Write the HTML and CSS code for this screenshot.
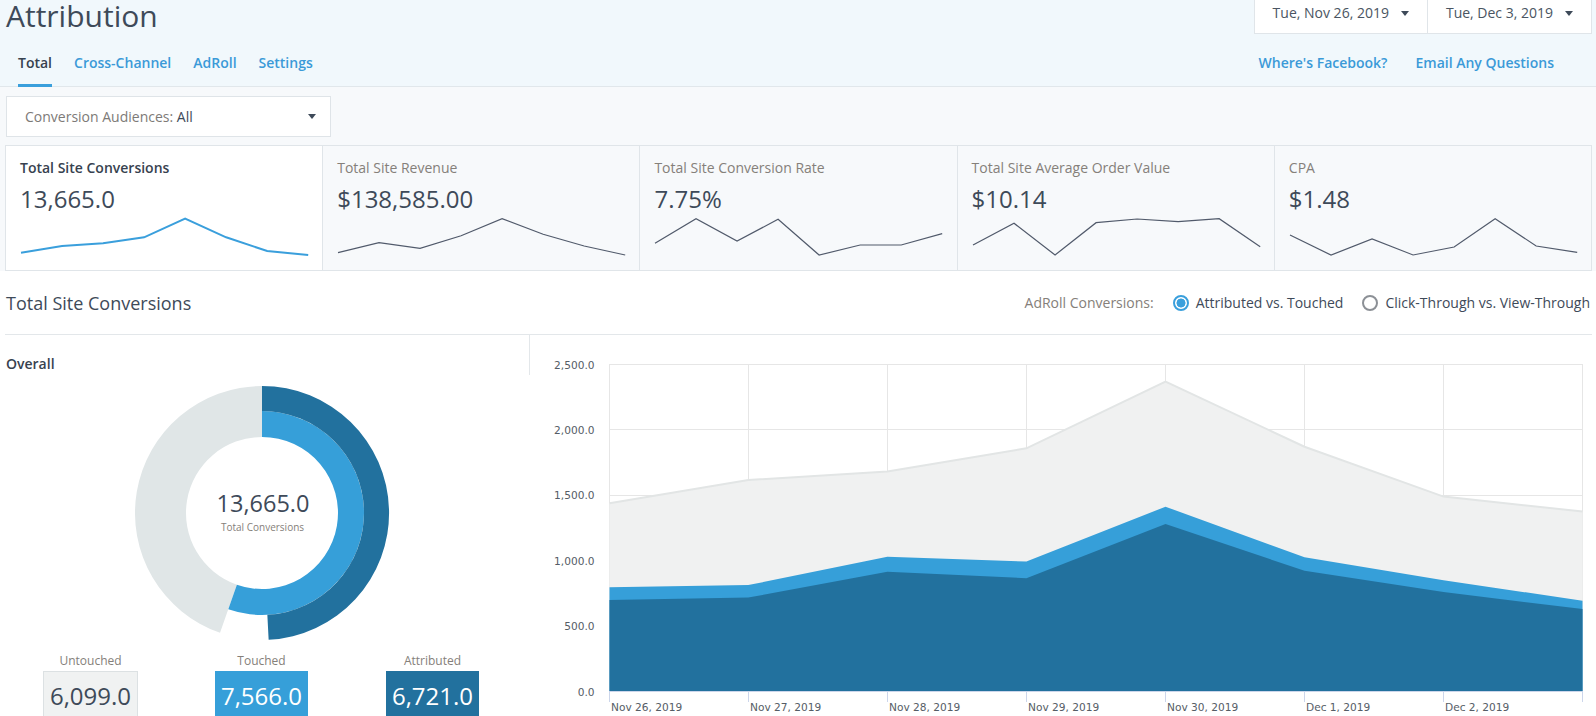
FILE: index.html
```html
<!DOCTYPE html>
<html lang="en">
<head>
<meta charset="utf-8">
<title>Attribution</title>
<link rel="stylesheet" href="styles.css">
</head>
<body>
<header class="top">
  <div class="top-row">
    <h1 class="title">Attribution</h1>
    <div class="dates">
      <div class="date date-start"><span>Tue, Nov 26, 2019</span><i class="caret"></i></div>
      <div class="date date-end"><span>Tue, Dec 3, 2019</span><i class="caret"></i></div>
    </div>
  </div>
  <nav class="nav-row">
    <div class="tabs">
      <a class="tab active">Total</a>
      <a class="tab">Cross-Channel</a>
      <a class="tab">AdRoll</a>
      <a class="tab">Settings</a>
    </div>
    <div class="links">
      <a class="link">Where's Facebook?</a>
      <a class="link">Email Any Questions</a>
    </div>
  </nav>
</header>

<section class="filters">
  <div class="select">
    <span><span class="select-label">Conversion Audiences:</span> All</span>
    <i class="caret"></i>
  </div>
  <div class="cards">
    <div class="card active">
      <div class="card-title">Total Site Conversions</div>
      <div class="card-value">13,665.0</div>
      <svg class="spark" viewBox="0 0 280 42" preserveAspectRatio="none"><polyline class="spark-line-active" points="0,36.7 40,30 80,27.3 120,21.3 160,2.7 200,21.3 240,35 280,39"/></svg>
    </div>
    <div class="card">
      <div class="card-title">Total Site Revenue</div>
      <div class="card-value">$138,585.00</div>
      <svg class="spark" viewBox="0 0 280 42" preserveAspectRatio="none"><polyline class="spark-line" points="0,36.7 40,26.7 80,32.3 120,19.7 160,2.7 200,18.3 240,30 280,39"/></svg>
    </div>
    <div class="card">
      <div class="card-title">Total Site Conversion Rate</div>
      <div class="card-value">7.75%</div>
      <svg class="spark" viewBox="0 0 280 42" preserveAspectRatio="none"><polyline class="spark-line" points="0,27.3 40,2.7 80,25 120,3.3 160,39 200,29 240,29 280,17.7"/></svg>
    </div>
    <div class="card">
      <div class="card-title">Total Site Average Order Value</div>
      <div class="card-value">$10.14</div>
      <svg class="spark" viewBox="0 0 280 42" preserveAspectRatio="none"><polyline class="spark-line" points="0,29 40,7.3 80,39 120,6.7 160,3 200,5.7 240,2.7 280,30.7"/></svg>
    </div>
    <div class="card">
      <div class="card-title">CPA</div>
      <div class="card-value">$1.48</div>
      <svg class="spark" viewBox="0 0 280 42" preserveAspectRatio="none"><polyline class="spark-line" points="0,19 40,39 80,23 120,39 160,31 200,2.7 240,30 280,36.3"/></svg>
    </div>
  </div>
</section>

<main class="content">
  <div class="section-head">
    <h2 class="section-title">Total Site Conversions</h2>
    <div class="radios">
      <span class="radios-label">AdRoll Conversions:</span>
      <span class="radio checked"></span><span class="radio-text">Attributed vs. Touched</span>
      <span class="radio"></span><span class="radio-text">Click-Through vs. View-Through</span>
    </div>
  </div>

  <div class="split">
    <div class="left">
      <div class="overall">Overall</div>
      <div class="donut-wrap">
        <svg class="donut" width="260" height="260" viewBox="0 0 260 260">
          <path fill="#e0e6e7" d="M 88.03 249.87 A 127 127 0 0 1 130 3 L 130 54 A 76 76 0 0 0 104.88 201.73 Z"/>
          <path fill="#369fd9" d="M 130 28 A 102 102 0 1 1 96.29 226.27 L 104.88 201.73 A 76 76 0 1 0 130 54 Z"/>
          <path fill="#22719e" d="M 130 3 A 127 127 0 0 1 136.65 256.83 L 135.34 231.86 A 102 102 0 0 0 130 28 Z"/>
          <text class="donut-value" x="131" y="128.5" text-anchor="middle">13,665.0</text>
          <text class="donut-label" x="130.5" y="148.3" text-anchor="middle">Total Conversions</text>
        </svg>
      </div>
      <div class="stats">
        <div class="stat">
          <div class="stat-label">Untouched</div>
          <div class="stat-box untouched">6,099.0</div>
        </div>
        <div class="stat">
          <div class="stat-label">Touched</div>
          <div class="stat-box touched">7,566.0</div>
        </div>
        <div class="stat">
          <div class="stat-label">Attributed</div>
          <div class="stat-box attributed">6,721.0</div>
        </div>
      </div>
    </div>

    <div class="right">
      <svg class="chart" width="1062" height="381" viewBox="530 335 1062 381">
        <g class="grid">
          <line x1="609" y1="364.5" x2="1583" y2="364.5"/>
          <line x1="609" y1="429.5" x2="1583" y2="429.5"/>
          <line x1="609" y1="495.5" x2="1583" y2="495.5"/>
          <line x1="609" y1="560.5" x2="1583" y2="560.5"/>
          <line x1="609" y1="626.5" x2="1583" y2="626.5"/>
          <line x1="609.5" y1="364" x2="609.5" y2="692"/>
          <line x1="748.5" y1="364" x2="748.5" y2="692"/>
          <line x1="887.5" y1="364" x2="887.5" y2="692"/>
          <line x1="1026.5" y1="364" x2="1026.5" y2="692"/>
          <line x1="1165.5" y1="364" x2="1165.5" y2="692"/>
          <line x1="1304.5" y1="364" x2="1304.5" y2="692"/>
          <line x1="1443.5" y1="364" x2="1443.5" y2="692"/>
          <line x1="1582.5" y1="364" x2="1582.5" y2="692"/>
        </g>
        <polygon class="area-total" points="609.5,503.3 748.3,480 887.4,471.5 1026.4,448.3 1165.5,381.7 1304.5,446.7 1443.5,496.6 1582.5,511.5 1582.5,691.7 609.5,691.7"/>
        <polyline class="line-total" points="609.5,503.3 748.3,480 887.4,471.5 1026.4,448.3 1165.5,381.7 1304.5,446.7 1443.5,496.6 1582.5,511.5"/>
        <polygon class="area-touched" points="609.5,587.2 748.3,585.1 887.4,556.7 1026.4,561.5 1165.5,506.7 1304.5,557.3 1443.5,580.3 1582.5,600.7 1582.5,691.7 609.5,691.7"/>
        <polygon class="area-attributed" points="609.5,599.9 748.3,597.6 887.4,571.8 1026.4,578.2 1165.5,523.9 1304.5,570.8 1443.5,592.1 1582.5,609.1 1582.5,691.7 609.5,691.7"/>
        <g class="axis">
          <line x1="609" y1="691.5" x2="1583" y2="691.5"/>
          <line x1="609.5" y1="692" x2="609.5" y2="702"/>
          <line x1="748.5" y1="692" x2="748.5" y2="702"/>
          <line x1="887.5" y1="692" x2="887.5" y2="702"/>
          <line x1="1026.5" y1="692" x2="1026.5" y2="702"/>
          <line x1="1165.5" y1="692" x2="1165.5" y2="702"/>
          <line x1="1304.5" y1="692" x2="1304.5" y2="702"/>
          <line x1="1443.5" y1="692" x2="1443.5" y2="702"/>
          <line x1="1582.5" y1="692" x2="1582.5" y2="702"/>
        </g>
        <g class="ylabels" text-anchor="end">
          <text x="594.5" y="368.5">2,500.0</text>
          <text x="594.5" y="433.5">2,000.0</text>
          <text x="594.5" y="499">1,500.0</text>
          <text x="594.5" y="564.5">1,000.0</text>
          <text x="594.5" y="630">500.0</text>
          <text x="594.5" y="695.5">0.0</text>
        </g>
        <g class="xlabels">
          <text x="611" y="710.7">Nov 26, 2019</text>
          <text x="750" y="710.7">Nov 27, 2019</text>
          <text x="889" y="710.7">Nov 28, 2019</text>
          <text x="1028" y="710.7">Nov 29, 2019</text>
          <text x="1167" y="710.7">Nov 30, 2019</text>
          <text x="1306" y="710.7">Dec 1, 2019</text>
          <text x="1445" y="710.7">Dec 2, 2019</text>
        </g>
      </svg>
    </div>
  </div>
</main>
</body>
</html>
```

FILE: styles.css
```css
html {
  overflow: hidden;
}

body {
  margin: 0;
  font-family: "Open Sans", "Noto Sans", sans-serif;
  color: #3e4a59;
  background: #ffffff;
}

/* ---------- header ---------- */
.top {
  background: #f1f8fc;
}

.top-row {
  display: flex;
  justify-content: space-between;
  align-items: flex-start;
  height: 34px;
}

.title {
  margin: 0 0 0 6px;
  font-size: 30px;
  line-height: 32px;
  font-weight: 400;
  color: #3e4a59;
}

.dates {
  display: flex;
  margin-right: 4px;
  background: #ffffff;
  border: 1px solid #e0e5e9;
  border-top: none;
}

.date {
  display: flex;
  align-items: flex-start;
  height: 33px;
  box-sizing: border-box;
  padding: 3px 18px 0 18px;
  font-size: 14px;
  line-height: 20px;
  color: #4a5562;
}

.date + .date {
  border-left: 1px solid #e0e5e9;
}

.date .caret {
  margin: 8px 0 0 12px;
}

.caret {
  display: inline-block;
  width: 0;
  height: 0;
  border-left: 4.5px solid transparent;
  border-right: 4.5px solid transparent;
  border-top: 5px solid #3e4a59;
}

.nav-row {
  display: flex;
  justify-content: space-between;
  height: 52px;
  border-bottom: 1px solid #e1e7eb;
}

.tabs {
  display: flex;
  padding-left: 18px;
}

.tab {
  display: block;
  height: 53px;
  box-sizing: border-box;
  margin-right: 22px;
  margin-bottom: -1px;
  padding-top: 19px;
  border-bottom: 3px solid transparent;
  font-size: 14px;
  line-height: 20px;
  font-weight: 600;
  color: #3b9ad8;
}

.tab.active {
  color: #37424f;
  border-bottom-color: #3a9fdc;
}

.links {
  display: flex;
  gap: 28px;
  margin-right: 42px;
  padding-top: 19px;
}

.link {
  font-size: 14px;
  line-height: 20px;
  font-weight: 600;
  color: #3b9ad8;
}

/* ---------- filters & cards ---------- */
.filters {
  background: #f7f9fb;
  padding: 9px 4px 0 5px;
}

.select {
  display: flex;
  align-items: center;
  justify-content: space-between;
  width: 325px;
  height: 41px;
  box-sizing: border-box;
  margin-left: 1px;
  padding: 0 14px 0 18px;
  background: #ffffff;
  border: 1px solid #dfe4e8;
  font-size: 14px;
  line-height: 20px;
  color: #3e4a59;
}

.select-label {
  color: #7d7a77;
}

.cards {
  display: flex;
  margin-top: 8px;
}

.card {
  flex: 1 1 0;
  height: 126px;
  box-sizing: border-box;
  padding: 12px 14px 0 14px;
  background: #f7f9fb;
  border-top: 1px solid #e0e5e9;
  border-bottom: 1px solid #e0e5e9;
  border-right: 1px solid #e0e5e9;
}

.card:first-child {
  border-left: 1px solid #e0e5e9;
}

.card.active {
  background: #ffffff;
}

.card-title {
  font-size: 14px;
  line-height: 20px;
  color: #85807a;
}

.card.active .card-title {
  font-weight: 600;
  color: #37424f;
}

.card-value {
  margin-top: 5px;
  font-size: 24px;
  line-height: 32px;
  color: #3e4a59;
}

.spark {
  display: block;
  width: calc(100% - 1px);
  height: 42px;
  margin: 1px 0 0 1px;
  overflow: visible;
}

.spark-line,
.spark-line-active {
  fill: none;
  vector-effect: non-scaling-stroke;
  stroke-linejoin: miter;
}

.spark-line {
  stroke: #515a6b;
  stroke-width: 1.2;
}

.spark-line-active {
  stroke: #3a9fdc;
  stroke-width: 2;
}

/* ---------- content ---------- */
.content {
  padding: 0 4px 0 5px;
}

.section-head {
  display: flex;
  align-items: center;
  justify-content: space-between;
  height: 64px;
  box-sizing: border-box;
  padding: 1px 2px 0 1px;
  border-bottom: 1px solid #e3e7ea;
}

.section-title {
  margin: 0;
  font-size: 18px;
  line-height: 24px;
  font-weight: 400;
  color: #3e4a59;
}

.radios {
  display: flex;
  align-items: center;
  font-size: 14px;
  line-height: 20px;
  color: #3e4a59;
}

.radios-label {
  color: #85807a;
  margin-right: 19px;
}

.radio {
  width: 16px;
  height: 16px;
  box-sizing: border-box;
  border: 2px solid #8c9096;
  border-radius: 50%;
  margin-right: 7px;
  background: #ffffff;
}

.radio.checked {
  border-color: #3a9fdc;
  background: radial-gradient(circle, #3a9fdc 0 4.2px, #ffffff 4.8px);
}

.radio-text + .radio {
  margin-left: 19px;
}

.split {
  display: grid;
  grid-template-columns: 525px 1fr;
}

.overall {
  height: 40px;
  box-sizing: border-box;
  padding: 19px 0 0 1px;
  border-right: 1px solid #e3e7ea;
  font-size: 14px;
  line-height: 20px;
  font-weight: 600;
  color: #37424f;
}

.donut-wrap {
  display: flex;
  justify-content: center;
  width: 513px;
  padding-top: 8px;
}

.donut {
  display: block;
}

.donut-value {
  font-family: "Open Sans", "Noto Sans", sans-serif;
  font-size: 23.5px;
  fill: #3e4a59;
}

.donut-label {
  font-family: "Open Sans", "Noto Sans", sans-serif;
  font-size: 10px;
  fill: #85807a;
}

.stats {
  display: grid;
  grid-template-columns: repeat(3, 1fr);
  width: 513px;
  margin-top: 10px;
  text-align: center;
}

.stat-label {
  font-size: 12px;
  line-height: 16px;
  color: #85807a;
}

.stat-box {
  display: inline-block;
  margin-top: 2px;
  padding: 9px 6px;
  font-size: 24px;
  line-height: 32px;
  color: #ffffff;
}

.stat-box.untouched {
  padding: 8px 6px;
  background: #f0f2f2;
  border: 1px solid #dce1e3;
  color: #3e4a59;
}

.stat-box.touched {
  background: #369fd9;
}

.stat-box.attributed {
  background: #22719e;
}

/* ---------- chart ---------- */
.chart {
  display: block;
}

.grid line {
  stroke: #e6e6e6;
  stroke-width: 1;
  shape-rendering: crispEdges;
}

.area-total {
  fill: #f0f1f1;
}

.line-total {
  fill: none;
  stroke: #e2e5e5;
  stroke-width: 2;
}

.area-touched {
  fill: #369fd9;
}

.area-attributed {
  fill: #22719e;
}

.axis line {
  stroke: #ccd6eb;
  stroke-width: 1;
  shape-rendering: crispEdges;
}

.ylabels text,
.xlabels text {
  font-family: "DejaVu Sans", Verdana, sans-serif;
  font-size: 10.6px;
  fill: #555d66;
}
```
